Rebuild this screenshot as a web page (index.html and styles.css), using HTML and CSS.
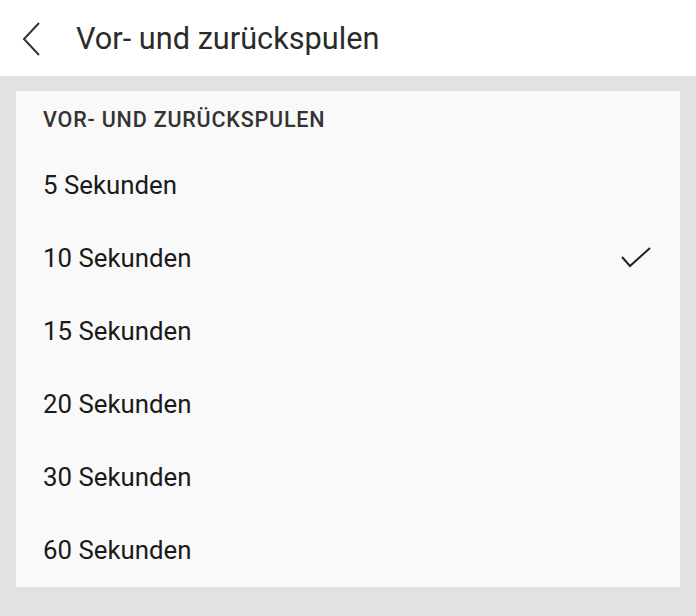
FILE: index.html
```html
<!DOCTYPE html>
<html lang="de">
<head>
    <meta charset="UTF-8">
    <meta name="viewport" content="width=device-width, initial-scale=1.0">
    <title>Vor- und zurückspulen</title>
    <link rel="stylesheet" href="styles.css">
</head>
<body>

    <header class="topbar">
        <button class="back" aria-label="Zurück">
            <svg width="20" height="34" viewBox="0 0 20 34"><polyline points="17,1 2,17 17,33" fill="none" stroke="#333" stroke-width="2"/></svg>
        </button>
        <h1>Vor- und zurückspulen</h1>
    </header>

    <main class="page">
        <section class="card">
            <h2>VOR- UND ZURÜCKSPULEN</h2>
            <ul class="options">
                <li>5 Sekunden</li>
                <li class="selected">10 Sekunden
                    <svg class="check" width="32" height="24" viewBox="0 0 32 24"><polyline points="2,11 10,20 30,2" fill="none" stroke="#222" stroke-width="2"/></svg>
                </li>
                <li>15 Sekunden</li>
                <li>20 Sekunden</li>
                <li>30 Sekunden</li>
                <li>60 Sekunden</li>
            </ul>
        </section>
    </main>

</body>
</html>
```

FILE: styles.css
```css
body {
    margin: 0;
    font-family: Roboto, "Noto Sans", sans-serif;
    background: #e2e2e2;
    height: 616px;
    overflow: hidden;
}

.topbar {
    height: 76px;
    background: #fff;
    display: flex;
    align-items: center;
}
.back {
    background: none;
    border: none;
    padding: 0;
    margin-left: 22px;
    width: 20px;
    height: 34px;
    margin-top: 2px;
}
.back svg { display: block; }
.topbar h1 {
    margin: 0 0 0 34px;
    font-size: 30.7px;
    font-weight: 400;
    color: #2b2b2b;
}

.page {
    padding: 15px 16px 0 16px;
}
.card {
    background: #f9f9f9;
    height: 496px;
}
.card h2 {
    margin: 0;
    padding-left: 27px;
    font-size: 21.5px;
    letter-spacing: 0.8px;
    font-weight: 500;
    color: #333;
    height: 57px;
    line-height: 57px;
}
.options {
    list-style: none;
    margin: 0;
    padding: 0;
}
.options li {
    height: 73px;
    display: flex;
    align-items: center;
    justify-content: space-between;
    padding: 0 28px 0 27px;
    font-size: 25.8px;
    color: #1a1a1a;
}
.check { display: block; }
```
